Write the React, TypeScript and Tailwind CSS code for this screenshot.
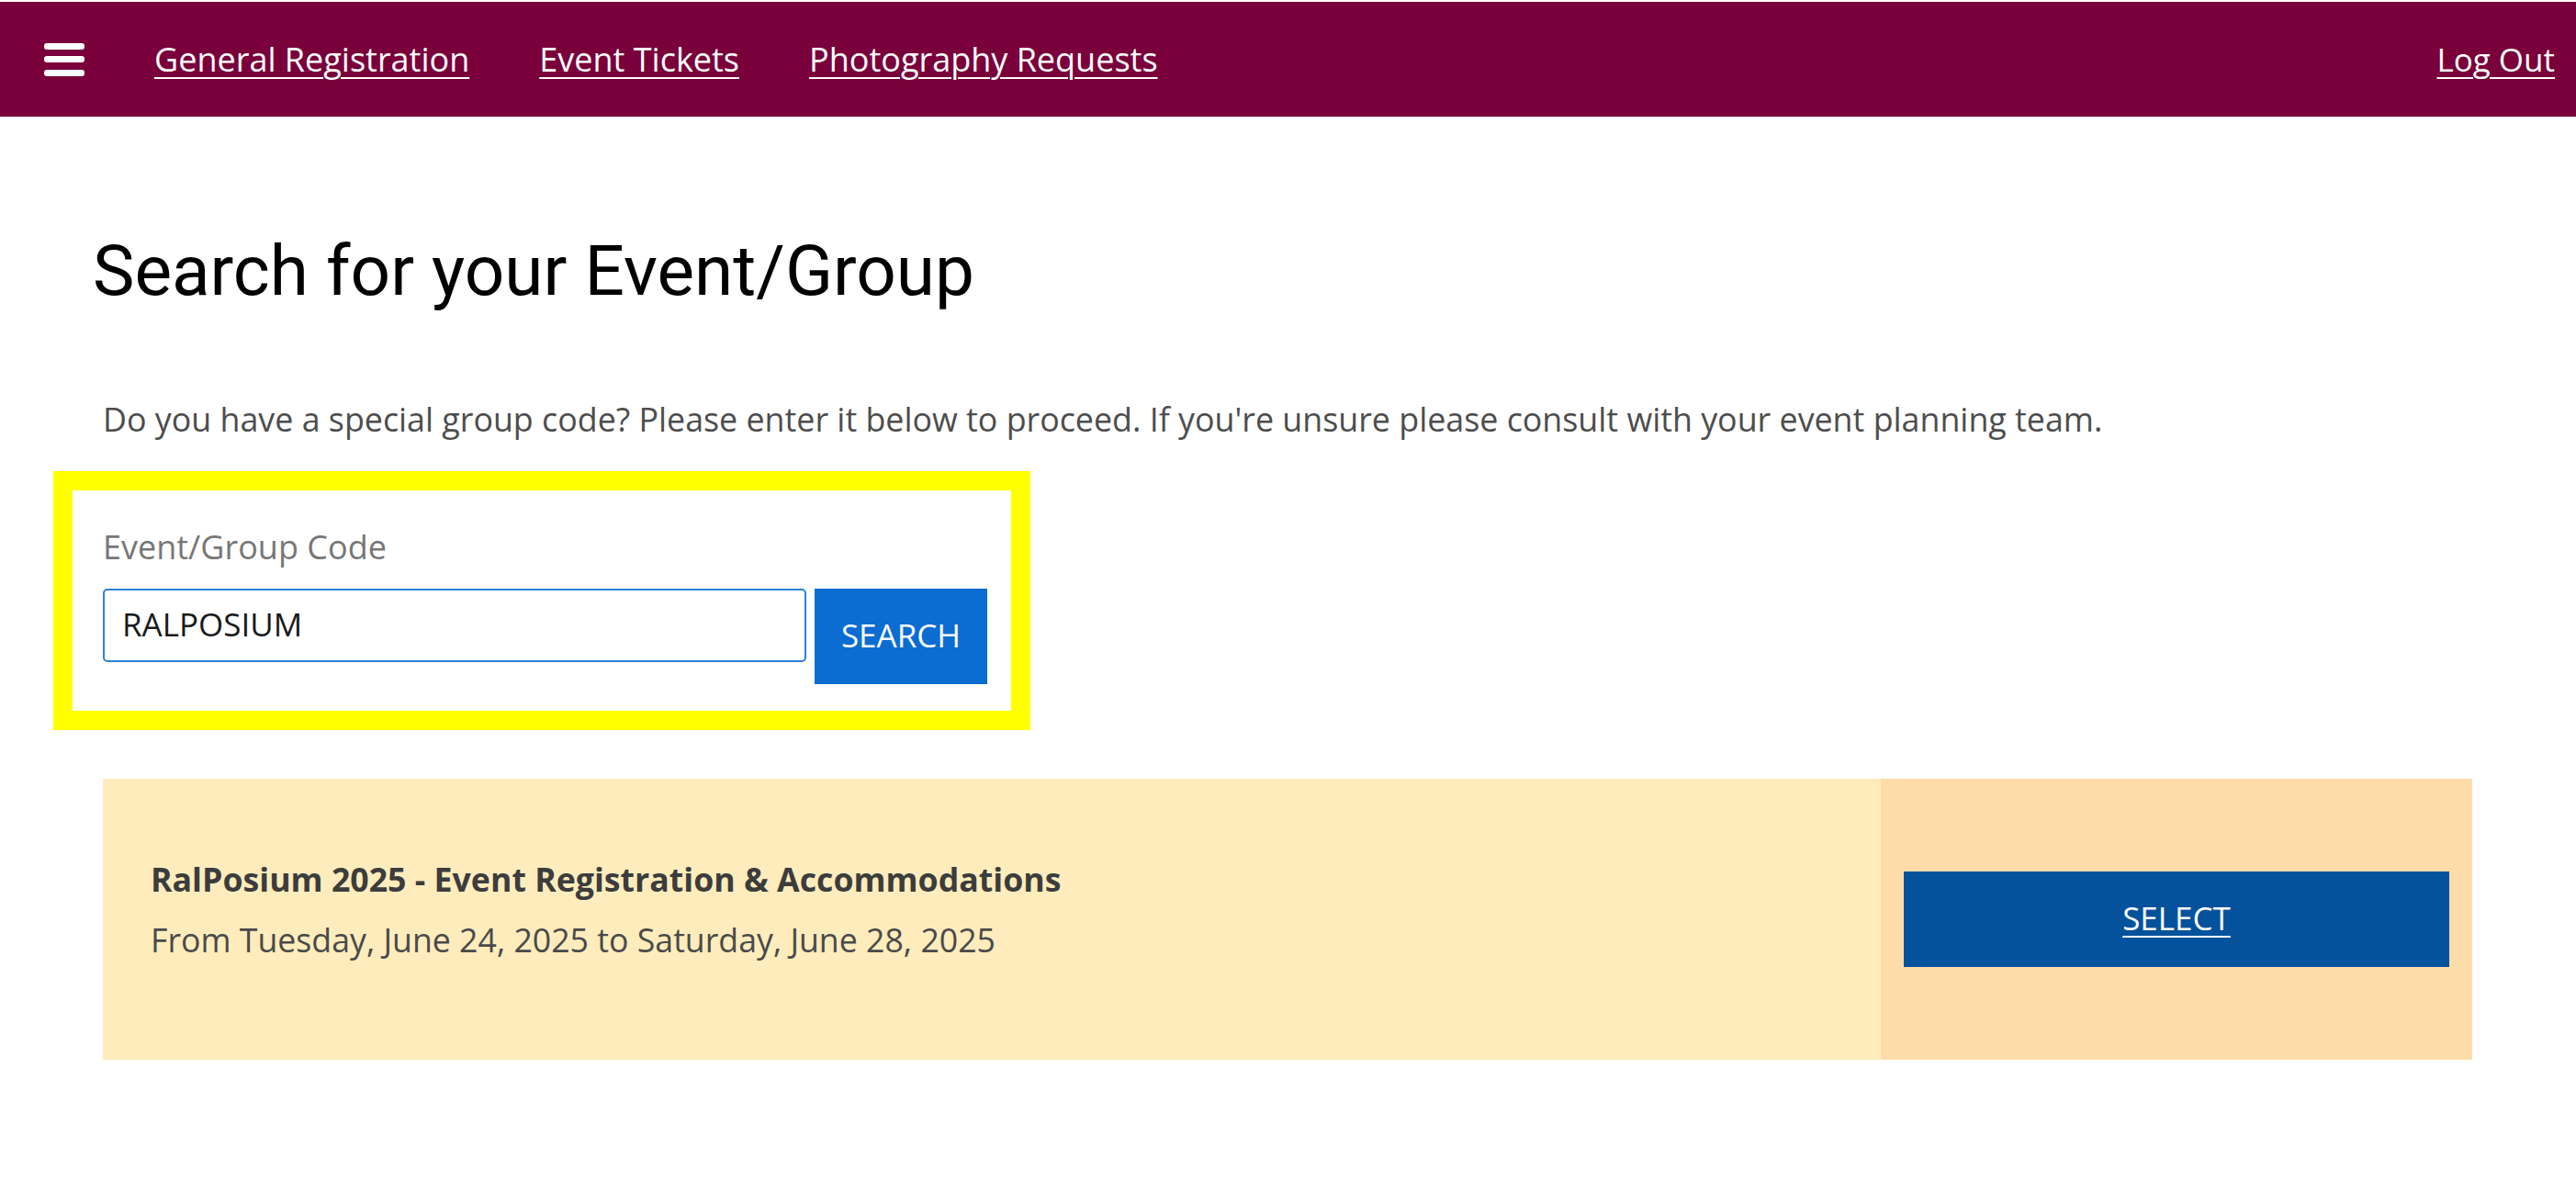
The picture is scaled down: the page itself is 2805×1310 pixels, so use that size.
import React from "react";

export default function App() {
  return (
    <div className="min-h-screen bg-white font-['Open_Sans',sans-serif]">
      <div className="h-[2px] bg-white" />
      <header className="flex h-[125px] items-center bg-[#79003a] pl-[48px] pr-[23px] text-white">
        <button className="flex h-[36px] w-[44px] flex-col justify-between" aria-label="menu">
          <span className="block h-[7px] w-full rounded-[3px] bg-white" />
          <span className="block h-[7px] w-full rounded-[3px] bg-white" />
          <span className="block h-[7px] w-full rounded-[3px] bg-white" />
        </button>
        <nav className="ml-[76px] flex gap-[76px] text-[36px] leading-none">
          <a className="underline decoration-[2px] underline-offset-[6px]">General Registration</a>
          <a className="underline decoration-[2px] underline-offset-[6px]">Event Tickets</a>
          <a className="underline decoration-[2px] underline-offset-[6px]">Photography Requests</a>
        </nav>
        <a className="ml-auto text-[35px] leading-none underline decoration-[2px] underline-offset-[6px]">Log Out</a>
      </header>

      <main className="pl-[112px]">
        <h1 className="-ml-[11px] mt-[130px] font-['Roboto',sans-serif] text-[76.5px] font-normal leading-none text-black">
          Search for your Event/Group
        </h1>
        <p className="mt-[98px] text-[35.8px] leading-[48px] text-[#4d4d4d]">
          Do you have a special group code? Please enter it below to proceed. If you're unsure please consult with your event planning team.
        </p>

        <div className="-ml-[54px] mt-[33px] w-[1064px] border-[21px] border-[#ffff00] bg-white pl-[33px] pr-[25px] pb-[29px] pt-[38px]">
          <label className="block text-[36px] leading-[48px] text-[#777]">Event/Group Code</label>
          <div className="mt-[21px] flex items-start gap-[9px]">
            <div className="flex h-[80px] w-[766px] items-center rounded-[5px] border-2 border-[#2e7fd6] pl-[19px] text-[35px] text-[#1a1a1a]">
              RALPOSIUM
            </div>
            <button className="flex h-[104px] w-[188px] items-center justify-center bg-[#0b6cd2] text-[35px] text-white">
              SEARCH
            </button>
          </div>
        </div>

        <div className="mt-[53px] flex h-[306px] w-[2580px]">
          <div className="flex flex-1 flex-col justify-center bg-[#feecbc] pb-[22px] pl-[52px]">
            <div className="text-[35.7px] font-bold leading-[50px] text-[#3c3c3c]">
              RalPosium 2025 - Event Registration &amp; Accommodations
            </div>
            <div className="mt-[16px] text-[35.7px] leading-[50px] text-[#4a4a4a]">
              From Tuesday, June 24, 2025 to Saturday, June 28, 2025
            </div>
          </div>
          <div className="flex w-[644px] items-center bg-[#fddcaa] px-[25px]">
            <button className="flex h-[104px] w-full items-center justify-center bg-[#04529c] text-[35px] text-white underline decoration-[2px] underline-offset-[6px]">
              SELECT
            </button>
          </div>
        </div>
      </main>
    </div>
  );
}
